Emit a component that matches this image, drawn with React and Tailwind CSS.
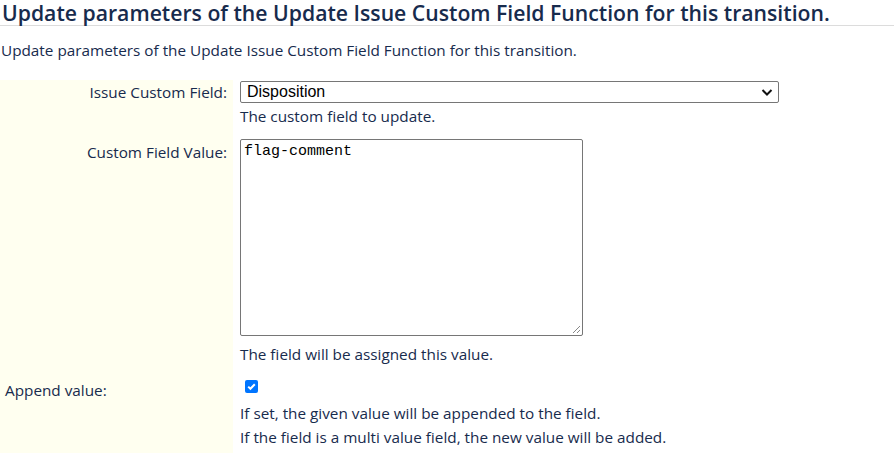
export default function App() {
  return (
    <div className="bg-white w-[894px] h-[453px] overflow-hidden text-[#172b4d]" style={{ fontFamily: '"Open Sans", "Noto Sans", sans-serif' }}>
      <h2 className="text-[21.2px] font-semibold leading-[24px] pt-[1px] pl-[2px] border-b border-[#dcdcdc] whitespace-nowrap">
        Update parameters of the Update Issue Custom Field Function for this transition.
      </h2>
      <p className="text-[15.3px] leading-[20px] mt-[14px] pl-[1px] whitespace-nowrap">
        Update parameters of the Update Issue Custom Field Function for this transition.
      </p>

      <div className="grid grid-cols-[233px_1fr] mt-[20px] text-[15.3px] leading-[20px]">
        {/* Issue Custom Field */}
        <div className="bg-[#fffff0] text-right pr-[6px] pt-[2px] pb-[13px]">Issue Custom Field:</div>
        <div className="pl-[7px] pt-[1px] pb-[13px]">
          <div className="relative w-[539px] h-[22px] border border-[#767676] rounded-[2px] bg-white flex items-center pl-[6px] text-[16px] text-black" style={{ fontFamily: '"Liberation Sans", Arial, sans-serif' }}>
            Disposition
            <svg className="absolute right-[5px] top-[6px]" width="12" height="9" viewBox="0 0 12 9">
              <path d="M1.5 2 L6 6.5 L10.5 2" fill="none" stroke="#111" strokeWidth="2" />
            </svg>
          </div>
          <div className="mt-[3px]">The custom field to update.</div>
        </div>

        {/* Custom Field Value */}
        <div className="bg-[#fffff0] text-right pr-[6px] pt-[3px]">Custom Field Value:</div>
        <div className="pl-[7px] pb-[7px]">
          <div className="relative w-[343px] h-[197px] border border-[#767676] rounded-[2px] bg-white pl-[3px] pt-[3px] text-[15px] leading-[18px] text-black" style={{ fontFamily: '"Liberation Mono", "Courier New", monospace' }}>
            flag-comment
            <svg className="absolute right-[1px] bottom-[1px]" width="10" height="10" viewBox="0 0 10 10">
              <path d="M9 2 L2 9 M9 6 L6 9" stroke="#888" strokeWidth="1" fill="none" />
            </svg>
          </div>
          <div className="mt-[8px]">The field will be assigned this value.</div>
        </div>

        {/* Append value */}
        <div className="bg-[#fffff0] pl-[5px] pt-[9px] h-[100px]">Append value:</div>
        <div className="pl-[12px] pt-[9px]">
          <div className="w-[13px] h-[13px] rounded-[2px] bg-[#0075ff] flex items-center justify-center">
            <svg width="11" height="11" viewBox="0 0 11 11">
              <path d="M2.2 5.6 L4.4 7.8 L8.8 3.2" fill="none" stroke="white" strokeWidth="2" />
            </svg>
          </div>
          <div className="mt-[10px] -ml-[5px]">If set, the given value will be appended to the field.</div>
          <div className="mt-[4px] -ml-[5px]">If the field is a multi value field, the new value will be added.</div>
        </div>
      </div>
    </div>
  );
}
